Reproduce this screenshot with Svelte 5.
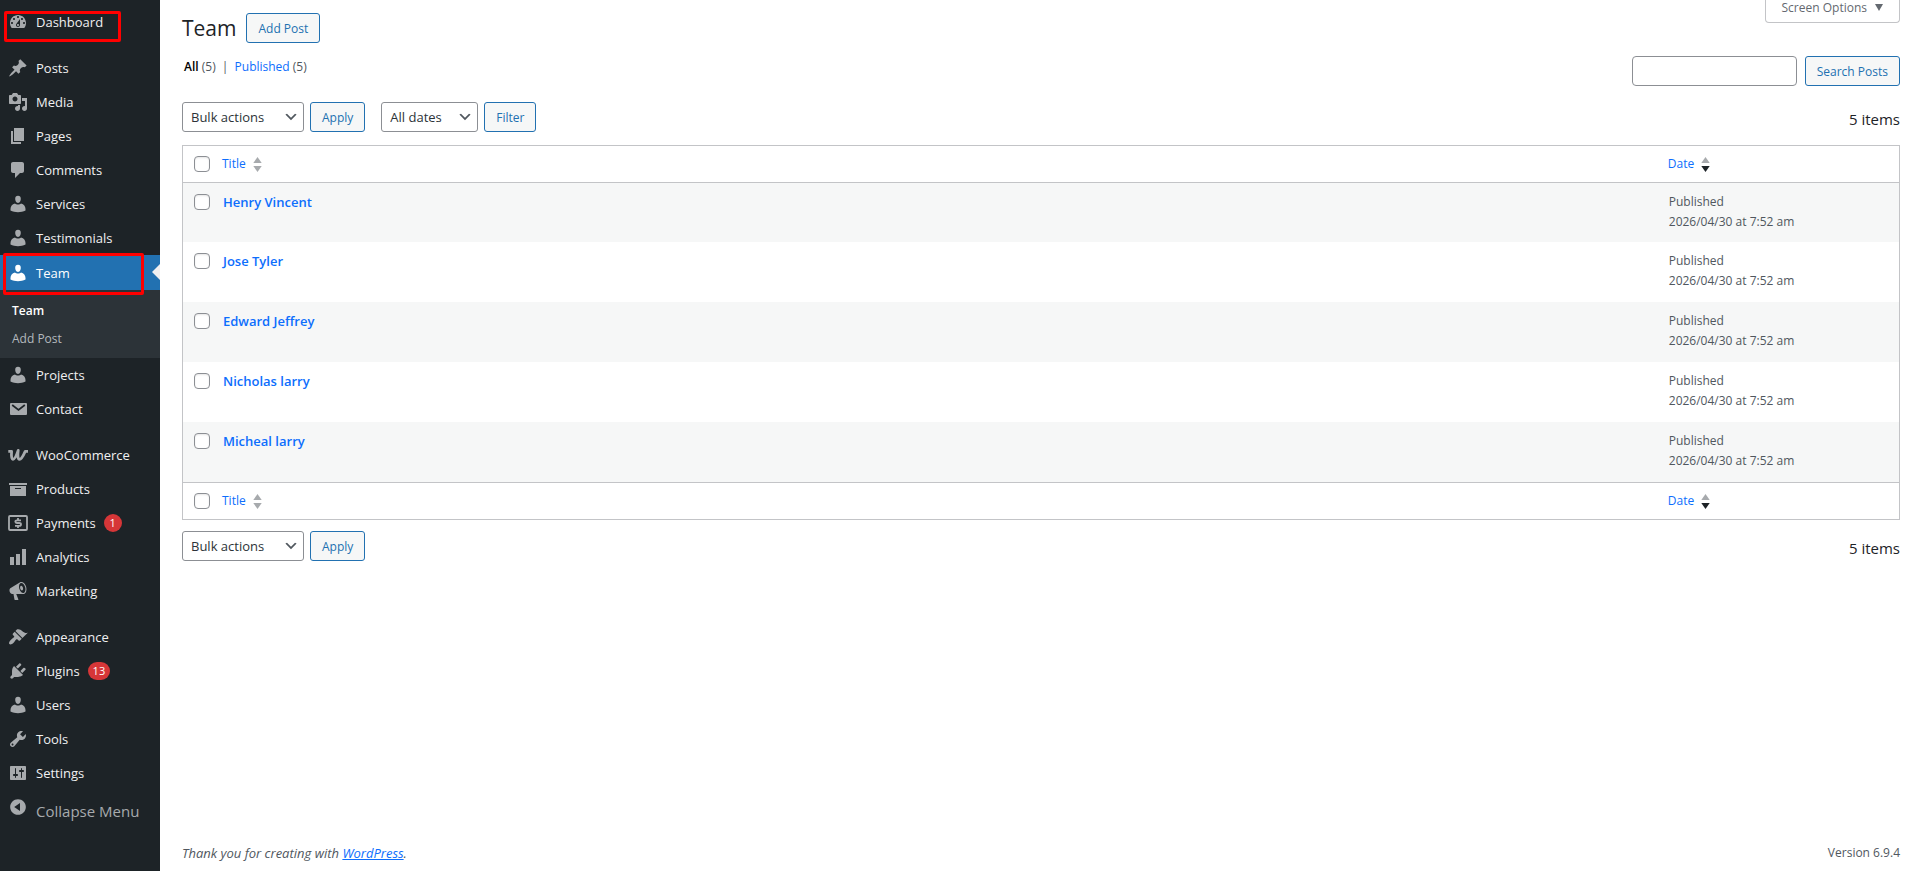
<script lang="ts">
    type MenuItem = {
        label: string;
        icon: string;
        count?: number;
        gap?: boolean; // leaves space above the item
        marked?: boolean;
        children?: string[];
    };

    // Icons on a 20x20 grid
    const icons: Record<string, string> = {
        dashboard:
            'M3.76 16h12.48c1.1-1.37 1.76-3.11 1.76-5 0-4.42-3.58-8-8-8s-8 3.58-8 8c0 1.89.66 3.63 1.76 5zM10 4c.55 0 1 .45 1 1s-.45 1-1 1-1-.45-1-1 .45-1 1-1zM6 6c.55 0 1 .45 1 1s-.45 1-1 1-1-.45-1-1 .45-1 1-1zm8 0c.55 0 1 .45 1 1s-.45 1-1 1-1-.45-1-1 .45-1 1-1zm-5.37 5.55L12 7v6c0 1.1-.9 2-2 2s-2-.9-2-2c0-.57.24-1.08.63-1.45zM4 10c.55 0 1 .45 1 1s-.45 1-1 1-1-.45-1-1 .45-1 1-1zm12 0c.55 0 1 .45 1 1s-.45 1-1 1-1-.45-1-1 .45-1 1-1zm-5 3c0-.55-.45-1-1-1s-1 .45-1 1 .45 1 1 1 1-.45 1-1z',
        post: 'M10.44 3.02l1.82-1.82 6.36 6.35-1.83 1.82c-1.05-.68-2.48-.57-3.41.36l-.75.75c-.92.93-1.04 2.35-.35 3.41l-1.83 1.82-2.41-2.41-2.8 2.79c-.42.42-3.38 2.71-3.8 2.29s1.86-3.39 2.28-3.81l2.79-2.79L4.1 9.36l1.83-1.82c1.05.69 2.48.57 3.4-.36l.75-.75c.93-.92 1.05-2.35.36-3.41z',
        media: 'M13 11V4c0-.55-.45-1-1-1h-1.67L9 1H5L3.67 3H2c-.55 0-1 .45-1 1v7c0 .55.45 1 1 1h10c.55 0 1-.45 1-1zM7 4.5c1.38 0 2.5 1.12 2.5 2.5S8.38 9.5 7 9.5 4.5 8.38 4.5 7 5.62 4.5 7 4.5zM14 6h5v10.5c0 1.38-1.12 2.5-2.5 2.5S14 17.88 14 16.5s1.12-2.5 2.5-2.5c.17 0 .34.02.5.05V9h-3V6zm-4 8.05V13h2v3.5c0 1.38-1.12 2.5-2.5 2.5S7 17.88 7 16.5 8.12 14 9.5 14c.17 0 .34.02.5.05z',
        page: 'M6 15V2h10v13H6zm-1 1h8v2H3V5h2v11z',
        comment: 'M5 2h9c1.1 0 2 .9 2 2v7c0 1.1-.9 2-2 2h-2l-5 5v-5H5c-1.1 0-2-.9-2-2V4c0-1.1.9-2 2-2z',
        user: 'M10 9C7.9 9 7.3 6.6 7.2 5 7.1 3 8.2 1.8 10 1.8s2.9 1.2 2.8 3.2C12.7 6.6 12.1 9 10 9zM7 9.4C8.2 10.8 11.8 10.8 13 9.4 15.9 9.9 17.5 12.4 17.5 15v1.6c-2.2 1.3-4.8 1.6-7.5 1.6s-5.3-.3-7.5-1.6V15c0-2.6 1.6-5.1 4.5-5.6z',
        archive: 'M19 4v2H1V4h18zM2 7h16v10H2V7zm11 3V9H7v1h6z',
        chart: 'M18 18V2h-4v16h4zm-6 0V7H8v11h4zm-6 0v-8H2v8h4z',
        megaphone:
            'M18.15 5.94c.46 1.62.38 3.22-.02 4.48-.42 1.28-1.26 2.18-2.3 2.48-.16.06-.26.06-.4.06-.06.02-.12.02-.18.02-.06.02-.14.02-.22.02h-6.8l2.22 5.5c.02.14-.06.26-.14.34-.08.1-.24.16-.34.16H6.95c-.1 0-.26-.06-.34-.16-.08-.08-.16-.2-.14-.34l-1-5.5H4.25l-.02-.02c-.5.06-1.08-.18-1.54-.62s-.88-1.08-1.06-1.88c-.24-.8-.2-1.56-.02-2.2.18-.62.58-1.08 1.06-1.3l.02-.02 9-5.4c.1-.06.18-.1.24-.16.06-.04.14-.08.24-.12.16-.08.28-.12.5-.18 1.04-.3 2.24.1 3.22.98s1.84 2.24 2.26 3.86zm-2.58 5.98h-.02c.4-.1.74-.34 1.04-.7.58-.7.86-1.76.86-3.04 0-.64-.1-1.3-.28-1.98-.34-1.36-1.02-2.5-1.78-3.24s-1.68-1.1-2.46-.88c-.82.22-1.4.96-1.7 2-.32 1.04-.28 2.36.06 3.72.38 1.36 1 2.5 1.8 3.24.78.74 1.62 1.1 2.48.88zm-2.54-7.08c.22-.04.42-.02.62.04.38.16.76.48 1.02 1s.42 1.2.42 1.78c0 .3-.04.56-.12.8-.18.48-.44.84-.86.94-.34.1-.8-.06-1.14-.4s-.64-.86-.78-1.5c-.18-.62-.12-1.24.02-1.72s.48-.84.82-.94z',
        brush: 'M14.48 11.06L7.41 3.99l1.5-1.5c.5-.56 2.3-.47 3.51.32 1.21.8 1.43 1.28 2.91 2.1 1.18.64 2.45 1.26 4.45.85zm-.71.71L6.7 4.7 4.93 6.47c-.39.39-.39 1.02 0 1.41l1.06 1.06c.39.39.39 1.03 0 1.42-.6.6-1.43 1.11-2.21 1.69-.35.26-.7.53-1.01.84C1.43 14.23.4 16.08 1.4 17.07c.99 1 2.84-.03 4.18-1.36.31-.31.58-.66.85-1.02.57-.78 1.08-1.61 1.69-2.21.39-.39 1.02-.39 1.41 0l1.06 1.06c.39.39 1.02.39 1.41 0z',
        plug: 'M13.11 4.36L9.87 7.6 8 5.73l3.24-3.24c.35-.34 1.05-.2 1.56.32.52.51.66 1.21.31 1.55zm-8 1.77l.91-1.12 9.01 9.01-1.19.84c-.71.71-2.63 1.16-3.82 1.16H6.14L4.9 17.26c-.59.59-1.54.59-2.12 0-.59-.58-.59-1.53 0-2.12l1.24-1.24v-3.88c0-1.13.4-3.19 1.09-3.89zm7.26 3.97l3.24-3.24c.34-.35 1.04-.21 1.55.31.52.51.66 1.21.31 1.55l-3.24 3.25z',
        tools: 'M16.68 9.77c-1.34 1.34-3.3 1.67-4.95.99l-5.41 6.52c-.99.99-2.59.99-3.58 0s-.99-2.59 0-3.57l6.52-5.42c-.68-1.65-.35-3.61.99-4.95 1.28-1.28 3.12-1.62 4.72-1.06l-2.89 2.89 2.82 2.82 2.86-2.87c.53 1.58.18 3.39-1.08 4.65zM3.81 16.21c.4.39 1.04.39 1.43 0 .4-.4.4-1.04 0-1.43-.39-.4-1.03-.4-1.43 0-.39.39-.39 1.03 0 1.43z',
        settings:
            'M18 16V4c0-.55-.45-1-1-1H3c-.55 0-1 .45-1 1v12c0 .55.45 1 1 1h14c.55 0 1-.45 1-1zM8 11h1c.55 0 1 .45 1 1s-.45 1-1 1H8v1.5c0 .28-.22.5-.5.5s-.5-.22-.5-.5V13H6c-.55 0-1-.45-1-1s.45-1 1-1h1V5.5c0-.28.22-.5.5-.5s.5.22.5.5V11zm5-2h-1c-.55 0-1-.45-1-1s.45-1 1-1h1V5.5c0-.28.22-.5.5-.5s.5.22.5.5V7h1c.55 0 1 .45 1 1s-.45 1-1 1h-1v5.5c0 .28-.22.5-.5.5s-.5-.22-.5-.5V9z',
        collapse:
            'M10 2.16c4.33 0 7.84 3.51 7.84 7.84s-3.51 7.84-7.84 7.84S2.16 14.33 2.16 10 5.71 2.16 10 2.16zm2 11.72V6.12L6.18 9.97z'
    };

    const menu: MenuItem[] = [
        { label: 'Dashboard', icon: 'dashboard', marked: true },
        { label: 'Posts', icon: 'post', gap: true },
        { label: 'Media', icon: 'media' },
        { label: 'Pages', icon: 'page' },
        { label: 'Comments', icon: 'comment' },
        { label: 'Services', icon: 'user' },
        { label: 'Testimonials', icon: 'user' },
        { label: 'Team', icon: 'user', marked: true, children: ['Team', 'Add Post'] },
        { label: 'Projects', icon: 'user' },
        { label: 'Contact', icon: 'email' },
        { label: 'WooCommerce', icon: 'woo', gap: true },
        { label: 'Products', icon: 'archive' },
        { label: 'Payments', icon: 'payments', count: 1 },
        { label: 'Analytics', icon: 'chart' },
        { label: 'Marketing', icon: 'megaphone' },
        { label: 'Appearance', icon: 'brush', gap: true },
        { label: 'Plugins', icon: 'plug', count: 13 },
        { label: 'Users', icon: 'user' },
        { label: 'Tools', icon: 'tools' },
        { label: 'Settings', icon: 'settings' }
    ];

    const members = ['Henry Vincent', 'Jose Tyler', 'Edward Jeffrey', 'Nicholas larry', 'Micheal larry'];
    const published = '2026/04/30 at 7:52 am';

    let selected: boolean[] = $state(members.map(() => false));
    let allSelected = $derived(selected.every(Boolean));

    function toggleAll() {
        const value = !allSelected;
        selected = members.map(() => value);
    }
</script>

{#snippet icon(name: string)}
    <svg class="icon" viewBox="0 0 20 20" aria-hidden="true">
        {#if name === 'woo'}
            <path
                d="M0.3 6.4H3.6C3.2 11 3.6 14.4 5.1 14.4 7 14.4 8.8 9.4 10.2 5.4 9.6 10 9.7 14.4 11.5 14.4 13.6 14.4 15.8 9.6 17.2 6.4H20"
                fill="none"
                stroke="currentColor"
                stroke-width="2.8"
                stroke-linejoin="round"
            />
        {:else if name === 'email'}
            <rect x="2" y="4" width="17" height="12" rx="1" fill="currentColor" />
            <path d="M4.2 6l6.3 5L16.8 6" fill="none" stroke="#1d2327" stroke-width="1.7" />
        {:else if name === 'payments'}
            <rect x="1" y="3" width="18" height="14" rx="1" fill="none" stroke="currentColor" stroke-width="1.8" />
            <path
                d="M13 7.3H9Q7.3 7.3 7.3 8.6T9 10H11.2Q13 10 13 11.4T11.2 12.8H7M10 5V7.3M10 12.8V15"
                fill="none"
                stroke="currentColor"
                stroke-width="1.8"
            />
        {:else}
            <path d={icons[name]} fill="currentColor" />
        {/if}
    </svg>
{/snippet}

{#snippet dropdown(label: string, option: string)}
    <div class="dropdown">
        <select aria-label={label}>
            <option>{option}</option>
        </select>
        <svg class="chevron" viewBox="0 0 20 20" aria-hidden="true">
            <path d="M5 6l5 5 5-5 2 1-7 7-7-7 2-1z" fill="#50575e" />
        </svg>
    </div>
{/snippet}

{#snippet sortLink(label: string, descending: boolean)}
    <a class="sort" href="#sort-{label.toLowerCase()}">
        {label}
        <svg class="arrows" viewBox="0 0 9 16" aria-hidden="true">
            <path d="M0 6.5L4.5 0L9 6.5z" fill="#a7aaad" />
            <path d="M0 9.5L4.5 16L9 9.5z" fill={descending ? '#1d2327' : '#a7aaad'} />
        </svg>
    </a>
{/snippet}

{#snippet headings(place: string)}
    <tr>
        <th class="check">
            <input
                type="checkbox"
                aria-label="Select all, {place}"
                checked={allSelected}
                onchange={toggleAll}
            />
        </th>
        <th>{@render sortLink('Title', false)}</th>
        <th class="date">{@render sortLink('Date', true)}</th>
    </tr>
{/snippet}

<div class="admin">
    <nav class="sidebar" aria-label="Main menu">
        <ul class="menu">
            {#each menu as item}
                <li class:gap={item.gap}>
                    <a
                        class="item"
                        class:current={item.children}
                        class:marked={item.marked}
                        href="#{item.label.toLowerCase()}"
                    >
                        {@render icon(item.icon)}
                        <span>{item.label}</span>
                        {#if item.count}
                            <span class="count">{item.count}</span>
                        {/if}
                    </a>
                    {#if item.children}
                        <ul class="submenu">
                            {#each item.children as child, i}
                                <li><a class:active={i === 0} href="#submenu-{i}">{child}</a></li>
                            {/each}
                        </ul>
                    {/if}
                </li>
            {/each}
        </ul>
        <button class="collapse" type="button">
            {@render icon('collapse')}
            <span>Collapse Menu</span>
        </button>
    </nav>

    <main class="content">
        <header class="top">
            <div class="heading">
                <h1>Team</h1>
                <a class="button" href="#new">Add Post</a>
            </div>
            <button class="screen-options" type="button">
                Screen Options
                <svg viewBox="0 0 8 7" aria-hidden="true">
                    <path d="M0 0h8L4 7z" fill="currentColor" />
                </svg>
            </button>
        </header>

        <div class="subbar">
            <div class="views">
                <a class="all" href="#all">All</a> <span>(5)</span>
                <span class="divider">|</span>
                <a href="#published">Published</a> <span>(5)</span>
            </div>
            <form class="search">
                <input type="search" aria-label="Search Posts" />
                <button class="button" type="button">Search Posts</button>
            </form>
        </div>

        <div class="tablenav">
            <div class="actions">
                {@render dropdown('Select bulk action', 'Bulk actions')}
                <button class="button" type="button">Apply</button>
            </div>
            <div class="actions dates">
                {@render dropdown('Filter by date', 'All dates')}
                <button class="button" type="button">Filter</button>
            </div>
            <span class="total">5 items</span>
        </div>

        <table>
            <thead>{@render headings('top')}</thead>
            <tbody>
                {#each members as member, i}
                    <tr>
                        <td class="check">
                            <input type="checkbox" aria-label="Select {member}" bind:checked={selected[i]} />
                        </td>
                        <td><a class="title" href="#member-{i}">{member}</a></td>
                        <td class="date">Published<br />{published}</td>
                    </tr>
                {/each}
            </tbody>
            <tfoot>{@render headings('bottom')}</tfoot>
        </table>

        <div class="tablenav bottom">
            <div class="actions">
                {@render dropdown('Select bulk action', 'Bulk actions')}
                <button class="button" type="button">Apply</button>
            </div>
            <span class="total">5 items</span>
        </div>

        <footer>
            <em>Thank you for creating with <a href="#wordpress">WordPress</a>.</em>
            <span>Version 6.9.4</span>
        </footer>
    </main>
</div>

<style>
    :global(body) {
        background: #fff;
    }

    .admin {
        display: flex;
        min-height: 100vh;
        font-family: 'Open Sans', 'Noto Sans', sans-serif;
        font-size: 12px;
        line-height: 20px;
        color: #50575e;
    }

    .admin *,
    .admin *::before {
        box-sizing: border-box;
    }

    a {
        color: #0d6efd;
        text-decoration: none;
    }

    button,
    select,
    input {
        margin: 0;
        font: inherit;
    }

    button {
        cursor: pointer;
    }

    /* Sidebar */
    .sidebar {
        flex: none;
        width: 160px;
        padding-top: 5px;
        background: #1d2327;
        font-size: 13px;
    }

    ul {
        margin: 0;
        padding: 0;
        list-style: none;
    }

    .gap {
        margin-top: 12px;
    }

    .item {
        position: relative;
        display: flex;
        align-items: center;
        gap: 8px;
        height: 34px;
        padding-left: 8px;
        color: #f0f0f1;
    }

    .icon {
        flex: none;
        width: 20px;
        height: 20px;
        color: #a7aaad;
    }

    .item.current {
        height: 35px;
        background: #2271b1;
        color: #fff;
    }

    .current .icon {
        color: #fff;
    }

    .current::after {
        content: '';
        position: absolute;
        top: 9px;
        right: 0;
        border: 8px solid transparent;
        border-left-width: 0;
        border-right-color: #f0f0f1;
    }

    /* Red outline laid over an item */
    .marked::before {
        content: '';
        position: absolute;
        top: 6px;
        left: 4px;
        z-index: 1;
        width: 117px;
        height: 31px;
        border: 3px solid #f00;
        border-radius: 2px;
    }

    .current.marked::before {
        top: -2px;
        left: 3px;
        width: 141px;
        height: 42px;
    }

    .count {
        min-width: 18px;
        padding: 0 5px;
        border-radius: 9px;
        background: #d63638;
        color: #fff;
        font-size: 11px;
        line-height: 18px;
        text-align: center;
    }

    .submenu {
        padding: 7px 0 5px;
        background: #2c3338;
        font-size: 12px;
    }

    .submenu a {
        display: block;
        padding: 4px 12px;
        color: #b4b9be;
    }

    .submenu .active {
        color: #fff;
        font-weight: 600;
    }

    .collapse {
        display: flex;
        gap: 8px;
        width: 100%;
        padding: 7px 8px;
        border: 0;
        background: none;
        color: #a7aaad;
        font-size: 15px;
        line-height: 28px;
    }

    /* Content */
    .content {
        flex: 1;
        display: flex;
        flex-direction: column;
        min-width: 0;
        padding: 0 13px 0 22px;
    }

    .top,
    .subbar {
        display: flex;
        justify-content: space-between;
        align-items: flex-start;
    }

    .heading {
        display: flex;
        align-items: center;
        gap: 10px;
        padding-top: 13px;
    }

    h1 {
        margin: 0;
        color: #1d2327;
        font-size: 21px;
        font-weight: 400;
        line-height: 30px;
    }

    .button {
        height: 30px;
        padding: 1px 11px 0;
        border: 1px solid #2271b1;
        border-radius: 3px;
        background: #f6f7f7;
        color: #2271b1;
        line-height: 27px;
        white-space: nowrap;
    }

    .screen-options {
        display: flex;
        align-items: center;
        gap: 8px;
        height: 23px;
        padding: 0 16px 7px;
        border: 1px solid #c3c4c7;
        border-top: 0;
        border-radius: 0 0 4px 4px;
        background: #fff;
        color: #646970;
    }

    .screen-options svg {
        width: 8px;
        height: 7px;
    }

    .subbar {
        margin-top: 13px;
    }

    .views {
        padding: 1px 0 0 2px;
    }

    .views .all {
        color: #000;
        font-weight: 600;
    }

    .divider {
        margin: 0 3px;
    }

    .search {
        display: flex;
        gap: 8px;
    }

    .search input {
        width: 165px;
        height: 30px;
        padding: 0 8px;
        border: 1px solid #8c8f94;
        border-radius: 4px;
        background: #fff;
    }

    .tablenav {
        display: flex;
        gap: 16px;
        margin: 16px 0 13px;
    }

    .tablenav.bottom {
        margin: 11px 0;
    }

    .actions {
        display: flex;
        gap: 6px;
    }

    .dropdown {
        display: grid;
        width: 122px;
    }

    .dates .dropdown {
        width: 97px;
    }

    .dropdown select,
    .chevron {
        grid-area: 1 / 1;
    }

    select {
        height: 30px;
        padding: 0 24px 0 8px;
        border: 1px solid #8c8f94;
        border-radius: 3px;
        background: #fff;
        color: #2c3338;
        font-size: 13px;
        appearance: none;
    }

    .chevron {
        align-self: center;
        justify-self: end;
        width: 16px;
        height: 16px;
        margin-right: 5px;
        pointer-events: none;
    }

    .total {
        height: 30px;
        margin-left: auto;
        color: #1d2327;
        font-size: 15px;
        line-height: 34px;
    }

    /* Table */
    table {
        width: 100%;
        border: 1px solid #c3c4c7;
        border-spacing: 0;
        table-layout: fixed;
    }

    th,
    td {
        padding: 0 9px;
        font-weight: 400;
        text-align: left;
    }

    th {
        height: 37px;
        vertical-align: middle;
    }

    thead th {
        border-bottom: 1px solid #c3c4c7;
    }

    tfoot th {
        border-top: 1px solid #c3c4c7;
    }

    td {
        height: 60px;
        padding: 9px 10px;
        vertical-align: top;
    }

    tbody tr:first-child td {
        height: 59px;
    }

    tbody tr:nth-child(odd) {
        background: #f6f7f7;
    }

    .check {
        width: 30px;
        padding-right: 0;
        padding-left: 11px;
    }

    td.check {
        padding-top: 11px;
    }

    .date {
        width: 14%;
    }

    .check input {
        display: block;
        width: 16px;
        height: 16px;
        border: 1px solid #8c8f94;
        border-radius: 4px;
        background: #fff;
        box-shadow: inset 0 1px 2px rgba(0, 0, 0, 0.1);
        appearance: none;
    }

    .check input:checked {
        background: #2271b1;
    }

    .sort {
        display: inline-flex;
        align-items: center;
        gap: 7px;
    }

    .arrows {
        width: 9px;
        height: 15px;
    }

    .title {
        font-size: 13px;
        font-weight: 600;
    }

    footer {
        display: flex;
        justify-content: space-between;
        margin-top: auto;
        padding-bottom: 8px;
    }

    footer em {
        font-size: 13px;
    }

    footer a {
        text-decoration: underline;
    }
</style>
